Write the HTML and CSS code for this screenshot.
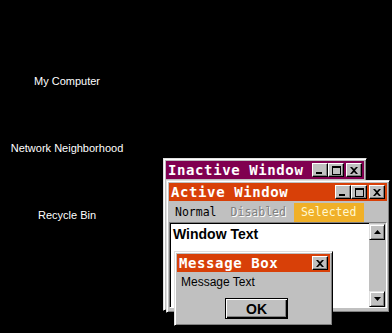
FILE: index.html
```html
<!DOCTYPE html>
<html>
<head>
    <meta charset="UTF-8">
    <title>Appearance</title>
    <link rel="stylesheet" href="styles.css">
</head>
<body>
    <div class="desktop">
        <ul class="icons">
            <li>My Computer</li>
            <li>Network Neighborhood</li>
            <li>Recycle Bin</li>
        </ul>

        <!-- inactive window, mostly covered -->
        <div class="window inactive">
            <div class="titlebar">
                <span class="title">Inactive Window</span>
                <span class="tbtns">
                    <span class="tbtn"><svg width="8" height="7" viewBox="0 0 8 7"><rect x="0" y="5" width="6" height="2" fill="#000"/></svg></span>
                    <span class="tbtn"><svg width="9" height="9" viewBox="0 0 9 9"><path d="M0 0H9V9H0Z M1 2V8H8V2Z" fill="#000" fill-rule="evenodd"/></svg></span>
                    <span class="tbtn close"><svg width="8" height="7" viewBox="0 0 8 7"><path d="M0 0H2L4 2L6 0H8L5 3.5L8 7H6L4 5L2 7H0L3 3.5Z" fill="#000"/></svg></span>
                </span>
            </div>
        </div>

        <!-- active window -->
        <div class="window active">
            <div class="titlebar">
                <span class="title">Active Window</span>
                <span class="tbtns">
                    <span class="tbtn"><svg width="8" height="7" viewBox="0 0 8 7"><rect x="0" y="5" width="6" height="2" fill="#000"/></svg></span>
                    <span class="tbtn"><svg width="9" height="9" viewBox="0 0 9 9"><path d="M0 0H9V9H0Z M1 2V8H8V2Z" fill="#000" fill-rule="evenodd"/></svg></span>
                    <span class="tbtn close"><svg width="8" height="7" viewBox="0 0 8 7"><path d="M0 0H2L4 2L6 0H8L5 3.5L8 7H6L4 5L2 7H0L3 3.5Z" fill="#000"/></svg></span>
                </span>
            </div>
            <div class="menu">
                <span class="item">Normal</span>
                <span class="item disabled">Disabled</span>
                <span class="item selected">Selected</span>
            </div>
            <div class="textarea">
                <div class="text">Window Text</div>
                <div class="scrollbar">
                    <span class="sbtn"><svg width="7" height="4" viewBox="0 0 7 4"><path d="M3.5 0L7 4H0Z" fill="#000"/></svg></span>
                    <span class="sbtn"><svg width="7" height="4" viewBox="0 0 7 4"><path d="M0 0H7L3.5 4Z" fill="#000"/></svg></span>
                </div>
            </div>
        </div>

        <!-- message box on top -->
        <div class="window msgbox">
            <div class="titlebar">
                <span class="title">Message Box</span>
                <span class="tbtns">
                    <span class="tbtn close"><svg width="8" height="7" viewBox="0 0 8 7"><path d="M0 0H2L4 2L6 0H8L5 3.5L8 7H6L4 5L2 7H0L3 3.5Z" fill="#000"/></svg></span>
                </span>
            </div>
            <div class="msg">Message Text</div>
            <div class="actions">
                <button class="ok">OK</button>
            </div>
        </div>
    </div>
</body>
</html>
```

FILE: styles.css
```css
* {
    box-sizing: border-box;
}

body {
    margin: 0;
    background-color: #000;
    overflow: hidden;
}

.desktop {
    position: relative;
    width: 392px;
    height: 333px;
}

/* desktop icon labels */
.icons {
    list-style: none;
    margin: 0;
    padding: 74px 0 0 0;
    width: 134px;
    display: flex;
    flex-direction: column;
    gap: 53px;
}

.icons li {
    color: #fff;
    font-family: "Liberation Sans", Arial, sans-serif;
    font-size: 11px;
    line-height: 14px;
    text-align: center;
}

/* windows */
.window {
    position: absolute;
    display: flex;
    flex-direction: column;
    background-color: #c0c0c0;
    border: 1px solid;
    border-color: #dfdfdf #000 #000 #dfdfdf;
    box-shadow: inset 1px 1px #fff, inset -1px -1px #808080;
    padding: 2px;
}

.inactive {
    left: 163px;
    top: 158px;
    width: 204px;
    height: 153px;
}

.active {
    left: 166px;
    top: 180px;
    width: 224px;
    height: 133px;
}

.msgbox {
    left: 174px;
    top: 251px;
    width: 159px;
    height: 75px;
}

.titlebar {
    display: flex;
    align-items: center;
    justify-content: space-between;
    height: 18px;
    padding: 0 2px 0 2px;
    color: #fff;
    font-family: "DejaVu Sans Mono", monospace;
    font-weight: bold;
    font-size: 14px;
    letter-spacing: 0.6px;
}

.inactive .titlebar {
    background-color: #800050;
}

.active .titlebar,
.msgbox .titlebar {
    background-color: #d84008;
}

.title {
    line-height: 18px;
    white-space: nowrap;
}

.tbtns {
    display: flex;
}

.tbtn {
    display: flex;
    align-items: center;
    justify-content: center;
    width: 16px;
    height: 14px;
    background-color: #c0c0c0;
    border: 1px solid;
    border-color: #fff #000 #000 #fff;
    box-shadow: inset -1px -1px #808080;
}

.tbtn.close {
    margin-left: 2px;
}

/* menu row */
.menu {
    display: flex;
    gap: 2px;
    height: 19px;
    margin-top: 2px;
    font-family: "DejaVu Sans Mono", monospace;
    font-size: 11.5px;
    line-height: 19px;
}

.item {
    padding: 0 6px;
    color: #000;
}

.item.disabled {
    color: #808080;
    text-shadow: 1px 1px #fff;
}

.item.selected {
    padding: 0 8px 0 7px;
    background-color: #f0b028;
    color: #fff8d0;
}

/* client area */
.textarea {
    flex: 1;
    display: flex;
    justify-content: space-between;
    background-color: #fff;
    border: 1px solid;
    border-color: #808080 #fff #fff #808080;
    box-shadow: inset 1px 1px #000;
    margin-bottom: 2px;
}

.text {
    padding: 3px 0 0 3px;
    font-family: "Liberation Sans", Arial, sans-serif;
    font-weight: bold;
    font-size: 14px;
    line-height: 16px;
    color: #000;
}

.scrollbar {
    width: 17px;
    display: flex;
    flex-direction: column;
    justify-content: space-between;
    background-color: #c0c0c0;
    padding: 1px 0 0 0;
}

.sbtn {
    display: flex;
    align-items: center;
    justify-content: center;
    width: 16px;
    height: 16px;
    background-color: #c0c0c0;
    border: 1px solid;
    border-color: #dfdfdf #000 #000 #dfdfdf;
    box-shadow: inset 1px 1px #fff, inset -1px -1px #808080;
}

/* message box */
.msg {
    padding: 3px 0 0 4px;
    font-family: "Liberation Sans", Arial, sans-serif;
    font-size: 12px;
    line-height: 14px;
    color: #000;
}

.actions {
    display: flex;
    justify-content: center;
    padding: 9px 0 0 6px;
}

.ok {
    width: 63px;
    height: 21px;
    padding: 0;
    background-color: #c0c0c0;
    border: 1px solid #000;
    box-shadow: inset 1px 1px #fff, inset -1px -1px #000, inset -2px -2px #808080;
    font-family: "Liberation Sans", Arial, sans-serif;
    font-weight: bold;
    font-size: 14px;
    color: #000;
}
```
